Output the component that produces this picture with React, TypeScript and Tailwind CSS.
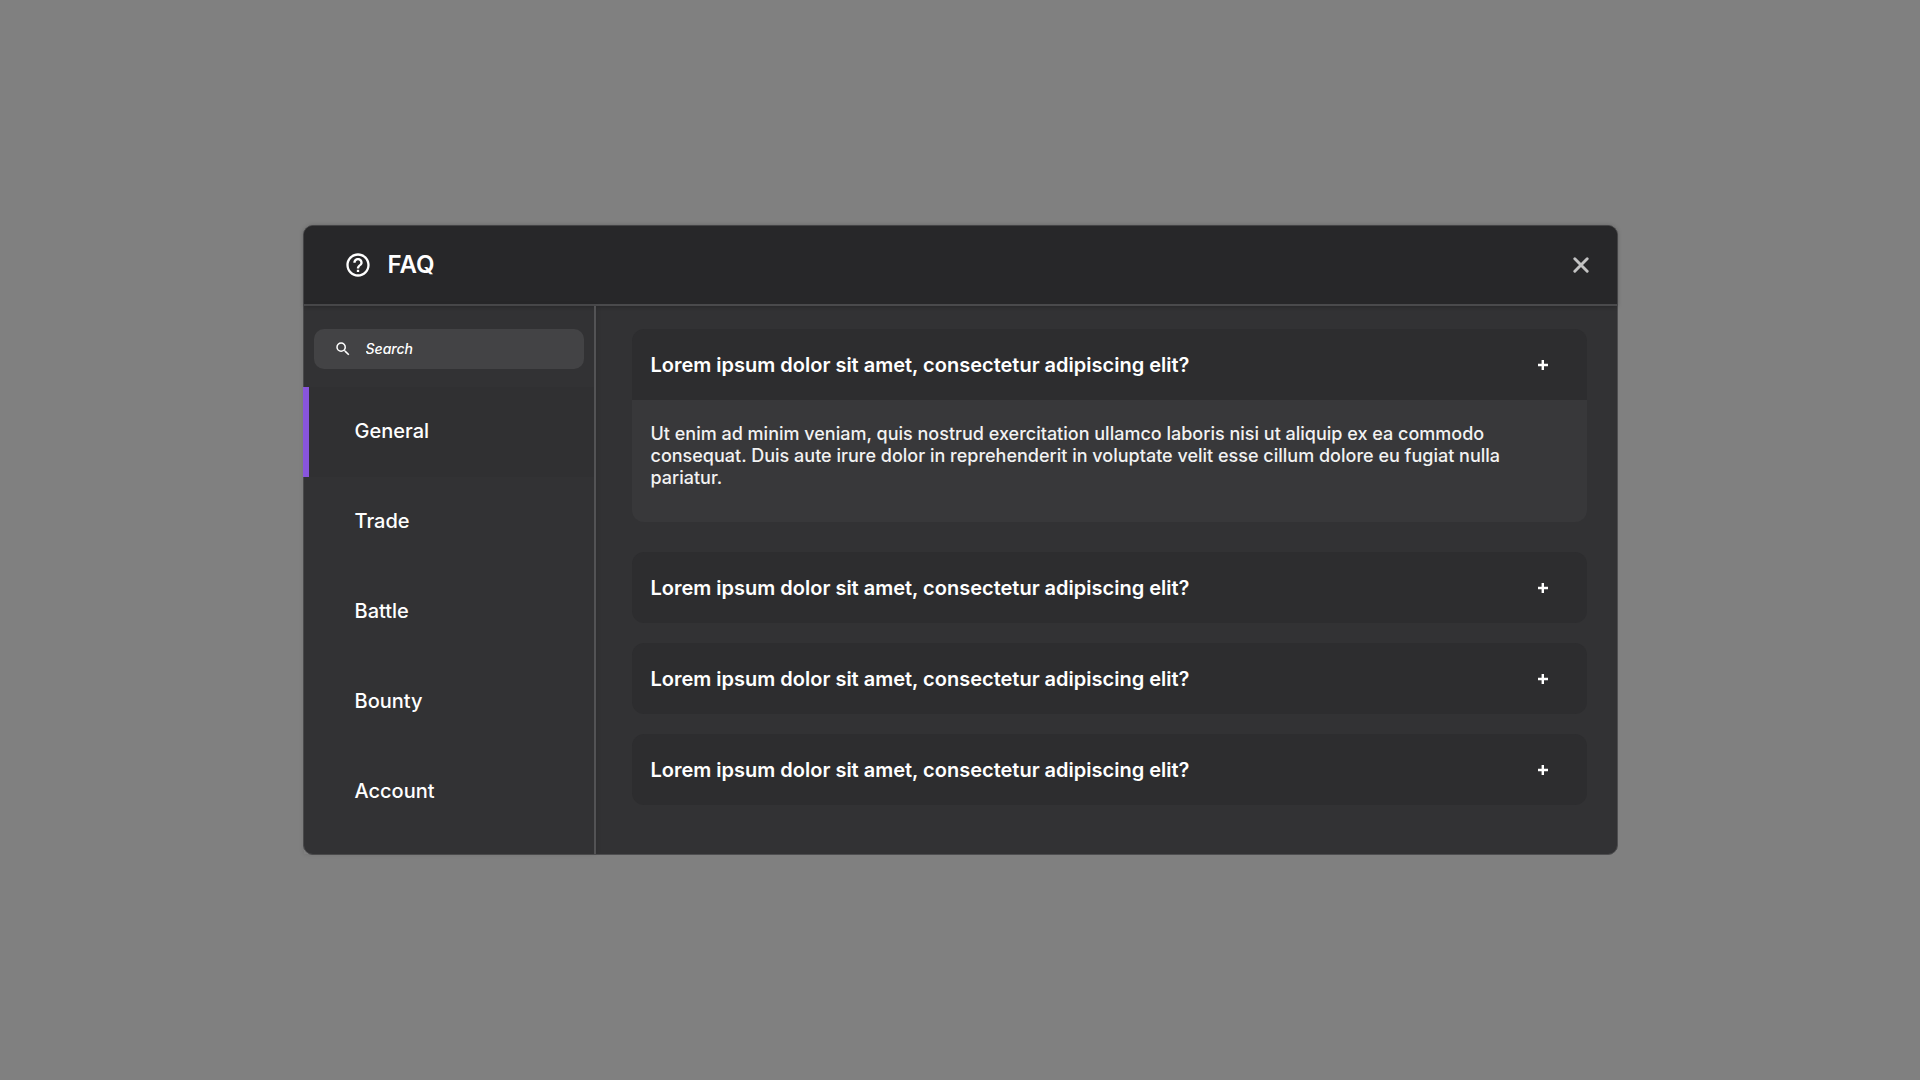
import { useState } from "react";
import { MdHelpOutline, MdSearch } from "react-icons/md";

const categories = ["General", "Trade", "Battle", "Bounty", "Account"];

const question = "Lorem ipsum dolor sit amet, consectetur adipiscing elit?";
const answer =
  "Ut enim ad minim veniam, quis nostrud exercitation ullamco laboris nisi ut aliquip ex ea commodo consequat. Duis aute irure dolor in reprehenderit in voluptate velit esse cillum dolore eu fugiat nulla pariatur.";

const entries = [1, 2, 3, 4].map((id) => ({ id, question, answer }));

function PlusIcon() {
  return (
    <svg viewBox="0 0 10 10" className="size-2.5 shrink-0" aria-hidden="true">
      <path d="M4.8 0v10M0 5h10" stroke="currentColor" strokeWidth="2.4" fill="none" />
    </svg>
  );
}

function CloseIcon() {
  return (
    <svg viewBox="0 0 16 16" className="size-4" aria-hidden="true">
      <path d="M1.8 1.8l12.4 12.4M14.2 1.8L1.8 14.2" stroke="currentColor" strokeWidth="2.9" strokeLinecap="round" fill="none" />
    </svg>
  );
}

function FaqItem({
  id,
  title,
  body,
  open,
  onToggle,
}: {
  id: number;
  title: string;
  body: string;
  open: boolean;
  onToggle: () => void;
}) {
  return (
    <article className={open ? "mb-2.5 overflow-hidden rounded-xl" : "overflow-hidden rounded-xl"}>
      <h2>
        <button
          type="button"
          aria-expanded={open}
          aria-controls={`answer-${id}`}
          onClick={onToggle}
          className="flex h-[71px] w-full items-center justify-between bg-[#2d2d2f] pr-[39px] pl-[19px] text-left text-xl font-semibold"
        >
          {title}
          <PlusIcon />
        </button>
      </h2>
      {open && (
        <p id={`answer-${id}`} className="min-h-[122px] bg-[#38383a] pt-[23px] pr-12 pb-8 pl-[19px] text-lg leading-[22px] font-medium text-[#f2f2f2]">
          {body}
        </p>
      )}
    </article>
  );
}

export default function App() {
  const [active, setActive] = useState("General");
  const [openId, setOpenId] = useState(1);

  return (
    <main className="flex min-h-screen items-center justify-center bg-[#808080] px-6 font-['Inter',sans-serif] text-white">
      <section
        role="dialog"
        aria-labelledby="faq-title"
        className="flex w-full max-w-[1315px] flex-col rounded-[10px] border border-[#4e4e50] bg-[#323234]"
      >
        <header className="flex h-20 items-center rounded-t-[9px] border-b-2 border-[#4a4a4c] bg-[#272729] pr-7 pl-10 shadow-[0_0_5px_rgba(0,0,0,0.3)]">
          <MdHelpOutline className="size-7" aria-hidden="true" />
          <h1 id="faq-title" className="ml-4 text-2xl leading-7 font-semibold">
            FAQ
          </h1>
          <button type="button" aria-label="Close" className="ml-auto text-[#c3c3c3]">
            <CloseIcon />
          </button>
        </header>

        <div className="flex grow">
          <aside className="w-[292px] shrink-0 border-r-2 border-[#535355] pt-[23px] pb-[17px] shadow-[0_0_5px_rgba(0,0,0,0.12)]">
            <label className="mx-2.5 flex h-10 items-center rounded-[10px] bg-[#434345] pr-3 pl-5">
              <MdSearch className="size-[18px] shrink-0" aria-hidden="true" />
              <input
                type="search"
                aria-label="Search"
                placeholder="Search"
                className="ml-3.5 w-full min-w-0 bg-transparent text-sm font-medium italic outline-none placeholder:text-white placeholder:opacity-100"
              />
            </label>
            <nav className="mt-[18px]" aria-label="FAQ categories">
              {categories.map((name) => (
                <button
                  key={name}
                  type="button"
                  onClick={() => setActive(name)}
                  className={
                    name === active
                      ? "-ml-px flex h-[90px] w-[291px] items-center border-l-6 border-[#8855dc] bg-[#303032] pb-0.5 pl-[46px] text-xl font-medium"
                      : "-ml-px flex h-[90px] w-[291px] items-center border-l-6 border-transparent pb-0.5 pl-[46px] text-xl font-medium"
                  }
                >
                  {name}
                </button>
              ))}
            </nav>
          </aside>

          <div className="flex min-w-0 grow flex-col gap-5 pt-[23px] pr-[30px] pb-12 pl-9">
            {entries.map((e) => (
              <FaqItem
                key={e.id}
                id={e.id}
                title={e.question}
                body={e.answer}
                open={e.id === openId}
                onToggle={() => setOpenId(e.id === openId ? 0 : e.id)}
              />
            ))}
          </div>
        </div>
      </section>
    </main>
  );
}
